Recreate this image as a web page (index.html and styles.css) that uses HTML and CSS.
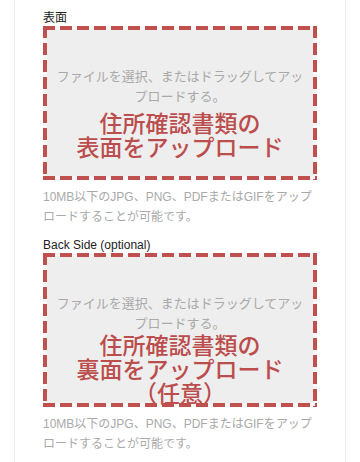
FILE: index.html
```html
<!DOCTYPE html>
<html lang="ja">
<head>
<meta charset="utf-8">
<link rel="stylesheet" href="styles.css">
</head>
<body>
<div class="card">
  <div class="field">
    <div class="label">表面</div>
    <div class="drop">
      <div class="drop-hint">ファイルを選択、またはドラッグしてアップロードする。</div>
      <div class="note">住所確認書類の<br>表面をアップロード</div>
    </div>
    <div class="help">10MB以下のJPG、PNG、PDFまたはGIFをアップロードすることが可能です。</div>
  </div>
  <div class="field">
    <div class="label">Back Side (optional)</div>
    <div class="drop">
      <div class="drop-hint">ファイルを選択、またはドラッグしてアップロードする。</div>
      <div class="note note-tight">住所確認書類の<br>裏面をアップロード<br>（任意）</div>
    </div>
    <div class="help">10MB以下のJPG、PNG、PDFまたはGIFをアップロードすることが可能です。</div>
  </div>
</div>
</body>
</html>
```
FILE: styles.css
```css
html, body {
  margin: 0;
  padding: 0;
  background: #ffffff;
}
body {
  font-family: "Liberation Sans", "Noto Sans CJK JP", sans-serif;
  width: 360px;
  height: 462px;
  overflow: hidden;
}
.card {
  margin: 0 14px;
  min-height: 462px;
  box-sizing: border-box;
  border-left: 1px solid #ececec;
  border-right: 1px solid #ececec;
  padding: 11px 28px 0 28px;
  display: flex;
  flex-direction: column;
  gap: 11px;
}
.field {
  display: flex;
  flex-direction: column;
}
.label {
  font-size: 12px;
  line-height: 15px;
  color: #222;
}
.drop {
  position: relative;
  box-sizing: border-box;
  height: 154px;
  background: #eeeeee;
  border: 4px solid #f6f6f6;
  padding: 36px 8px 0 8px;
  text-align: center;
}
.drop::after {
  content: "";
  position: absolute;
  top: -4px;
  left: -4px;
  right: -4px;
  bottom: -4px;
  pointer-events: none;
  background:
    repeating-linear-gradient(90deg, #c0504d 0 12px, transparent 12px 17px) top left / 100% 4px no-repeat,
    repeating-linear-gradient(90deg, #c0504d 0 12px, transparent 12px 17px) bottom left / 100% 4px no-repeat,
    repeating-linear-gradient(180deg, #c0504d 0 12px, transparent 12px 17px) top left / 4px 100% no-repeat,
    repeating-linear-gradient(180deg, #c0504d 0 12px, transparent 12px 17px) top right / 4px 100% no-repeat;
}
.drop-hint {
  font-family: "Noto Sans CJK JP", sans-serif;
  font-size: 13px;
  line-height: 20px;
  color: #a9a9a9;
}
.note {
  margin-top: 4px;
  font-family: "Noto Sans CJK JP", sans-serif;
  font-weight: 500;
  font-size: 23px;
  line-height: 24px;
  color: #bb4d4c;
}
.note-tight {
  margin-top: -1px;
}
.help {
  margin-top: 7px;
  font-size: 12px;
  line-height: 20px;
  color: #a9a9a9;
}
```
